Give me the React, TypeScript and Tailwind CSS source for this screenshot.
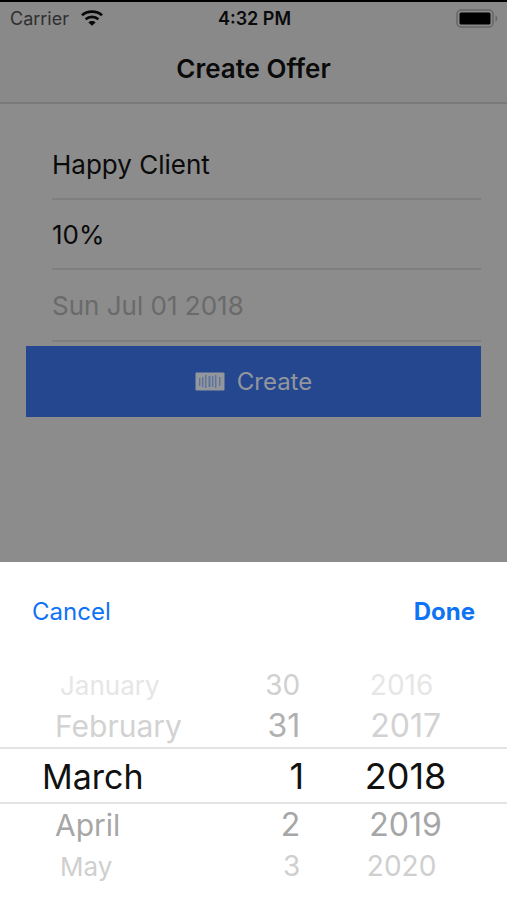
import { useState } from "react";

interface PickerRow {
  month: string;
  day: string;
  year: string;
  row: string;
  monthClass: string;
  dayClass: string;
  yearClass: string;
}

const rows: PickerRow[] = [
  {
    month: "January",
    day: "30",
    year: "2016",
    row: "h-10",
    monthClass: "pl-[60px] text-[26px] text-[#e6e6e6]",
    dayClass: "pr-1 text-[28px] text-[#d0d0d0]",
    yearClass: "pr-2 text-[28px] text-[#e6e6e6]",
  },
  {
    month: "February",
    day: "31",
    year: "2017",
    row: "h-[42px]",
    monthClass: "pl-[55px] text-[30px] text-[#d2d2d2]",
    dayClass: "pr-1 text-[32px] text-[#b0b0b0]",
    yearClass: "text-[32px] text-[#d2d2d2]",
  },
  {
    month: "March",
    day: "1",
    year: "2018",
    row: "h-[57px] border-y-2 border-[#e4e4e4]",
    monthClass: "pl-[42px] text-[34px] text-[#111111]",
    dayClass: "text-[36px] text-[#111111]",
    yearClass: "text-[36px] text-[#111111]",
  },
  {
    month: "April",
    day: "2",
    year: "2019",
    row: "h-[42px]",
    monthClass: "pl-[55px] text-[30px] text-[#a6a6a6]",
    dayClass: "pr-1 text-[32px] text-[#a6a6a6]",
    yearClass: "text-[32px] text-[#a6a6a6]",
  },
  {
    month: "May",
    day: "3",
    year: "2020",
    row: "h-10",
    monthClass: "pl-[60px] text-[26px] text-[#cfcfcf]",
    dayClass: "pr-1 text-[28px] text-[#cfcfcf]",
    yearClass: "pr-2 text-[28px] text-[#cfcfcf]",
  },
];

function WifiIcon() {
  return (
    <svg width="22" height="16" viewBox="0 0 22 16" fill="none" aria-hidden="true">
      <path d="M1 5.2C6.4 0.4 15.6 0.4 21 5.2" stroke="#080808" strokeWidth="2.8" />
      <path d="M4.6 9.2C8.2 6 13.8 6 17.4 9.2" stroke="#080808" strokeWidth="2.7" />
      <path d="M11 15.8L7.4 12.4C9.4 10.6 12.6 10.6 14.6 12.4Z" fill="#080808" />
    </svg>
  );
}

function BatteryIcon() {
  return (
    <svg width="43" height="19" viewBox="0 0 43 19" fill="none" aria-hidden="true">
      <rect x="1" y="1" width="36" height="17" rx="4" stroke="#666666" strokeWidth="1.5" />
      <rect x="3.5" y="3.5" width="31" height="12" rx="1.5" fill="#000000" />
      <path d="M39.5 6.5C42 7.5 42 11.5 39.5 12.5Z" fill="#666666" />
    </svg>
  );
}

function BarcodeIcon() {
  return (
    <svg width="30" height="19" viewBox="0 0 30 19" aria-hidden="true">
      <rect x="0.5" y="0.5" width="29" height="18" rx="1" fill="#92969d" />
      <g fill="#5f729b">
        <rect x="4" y="6" width="1.4" height="8" />
        <rect x="7" y="5" width="1.4" height="10" />
        <rect x="10" y="3" width="1.4" height="13" />
        <rect x="13.5" y="4" width="2" height="11" />
        <rect x="17" y="4" width="1.4" height="11" />
        <rect x="20" y="3" width="1.4" height="13" />
        <rect x="24" y="5" width="1.4" height="9" />
      </g>
    </svg>
  );
}

export default function App() {
  const [client, setClient] = useState<string>("Happy Client");
  const [discount, setDiscount] = useState<string>("10%");

  return (
    <div className="flex min-h-screen flex-col bg-[#8c8c8c] font-['Inter',sans-serif] text-[#0a0a0a]">
      <header className="border-t-2 border-b-2 border-t-black border-b-[#797979] bg-[#898989]">
        <div className="grid h-8 grid-cols-3 items-center pr-2 pl-[10px] text-[18px]">
          <div className="flex items-center gap-3 text-[#2f2f2f]">
            <span>Carrier</span>
            <WifiIcon />
          </div>
          <span className="text-center font-semibold whitespace-nowrap">4:32 PM</span>
          <div className="flex justify-end">
            <BatteryIcon />
          </div>
        </div>
        <h1 className="flex h-[68px] items-center justify-center text-[26px] font-semibold">
          Create Offer
        </h1>
      </header>

      <form className="flex flex-col px-[26px] pt-[26px] pb-8">
        <div className="flex flex-col pb-1 pl-[26px]">
          <input
            aria-label="Client"
            className="h-[70px] w-full border-b-2 border-[#7f7f7f] bg-transparent text-[26px] outline-none"
            value={client}
            onChange={(e) => setClient(e.target.value)}
          />
          <input
            aria-label="Discount"
            className="h-[70px] w-full border-b-2 border-[#7f7f7f] bg-transparent text-[26px] outline-none"
            value={discount}
            onChange={(e) => setDiscount(e.target.value)}
          />
          <input
            aria-label="Expiry date"
            className="h-[72px] w-full border-b-2 border-[#7f7f7f] bg-transparent text-[26px] outline-none placeholder:text-[#6a6a6a]"
            placeholder="Sun Jul 01 2018"
            readOnly
          />
        </div>
        <button
          type="button"
          className="flex h-[71px] items-center justify-center gap-3 bg-[#25478f] text-[24px] text-[#92969d]"
        >
          <BarcodeIcon />
          Create
        </button>
      </form>

      <section className="mt-auto bg-white pb-[14px]">
        <div className="flex h-[99px] items-center justify-between px-8 text-[24px] text-[#0f73f5]">
          <button type="button">Cancel</button>
          <button type="button" className="font-bold">
            Done
          </button>
        </div>
        {/* wheel rows, tallest in the middle */}
        <div className="pt-1">
          {rows.map((item) => (
            <div
              key={item.month}
              className={`grid grid-cols-[3fr_2fr] items-center leading-none ${item.row}`}
            >
              <div className="flex items-baseline justify-between">
                <span className={item.monthClass}>{item.month}</span>
                <span className={item.dayClass}>{item.day}</span>
              </div>
              <span className={`text-center ${item.yearClass}`}>{item.year}</span>
            </div>
          ))}
        </div>
      </section>
    </div>
  );
}
